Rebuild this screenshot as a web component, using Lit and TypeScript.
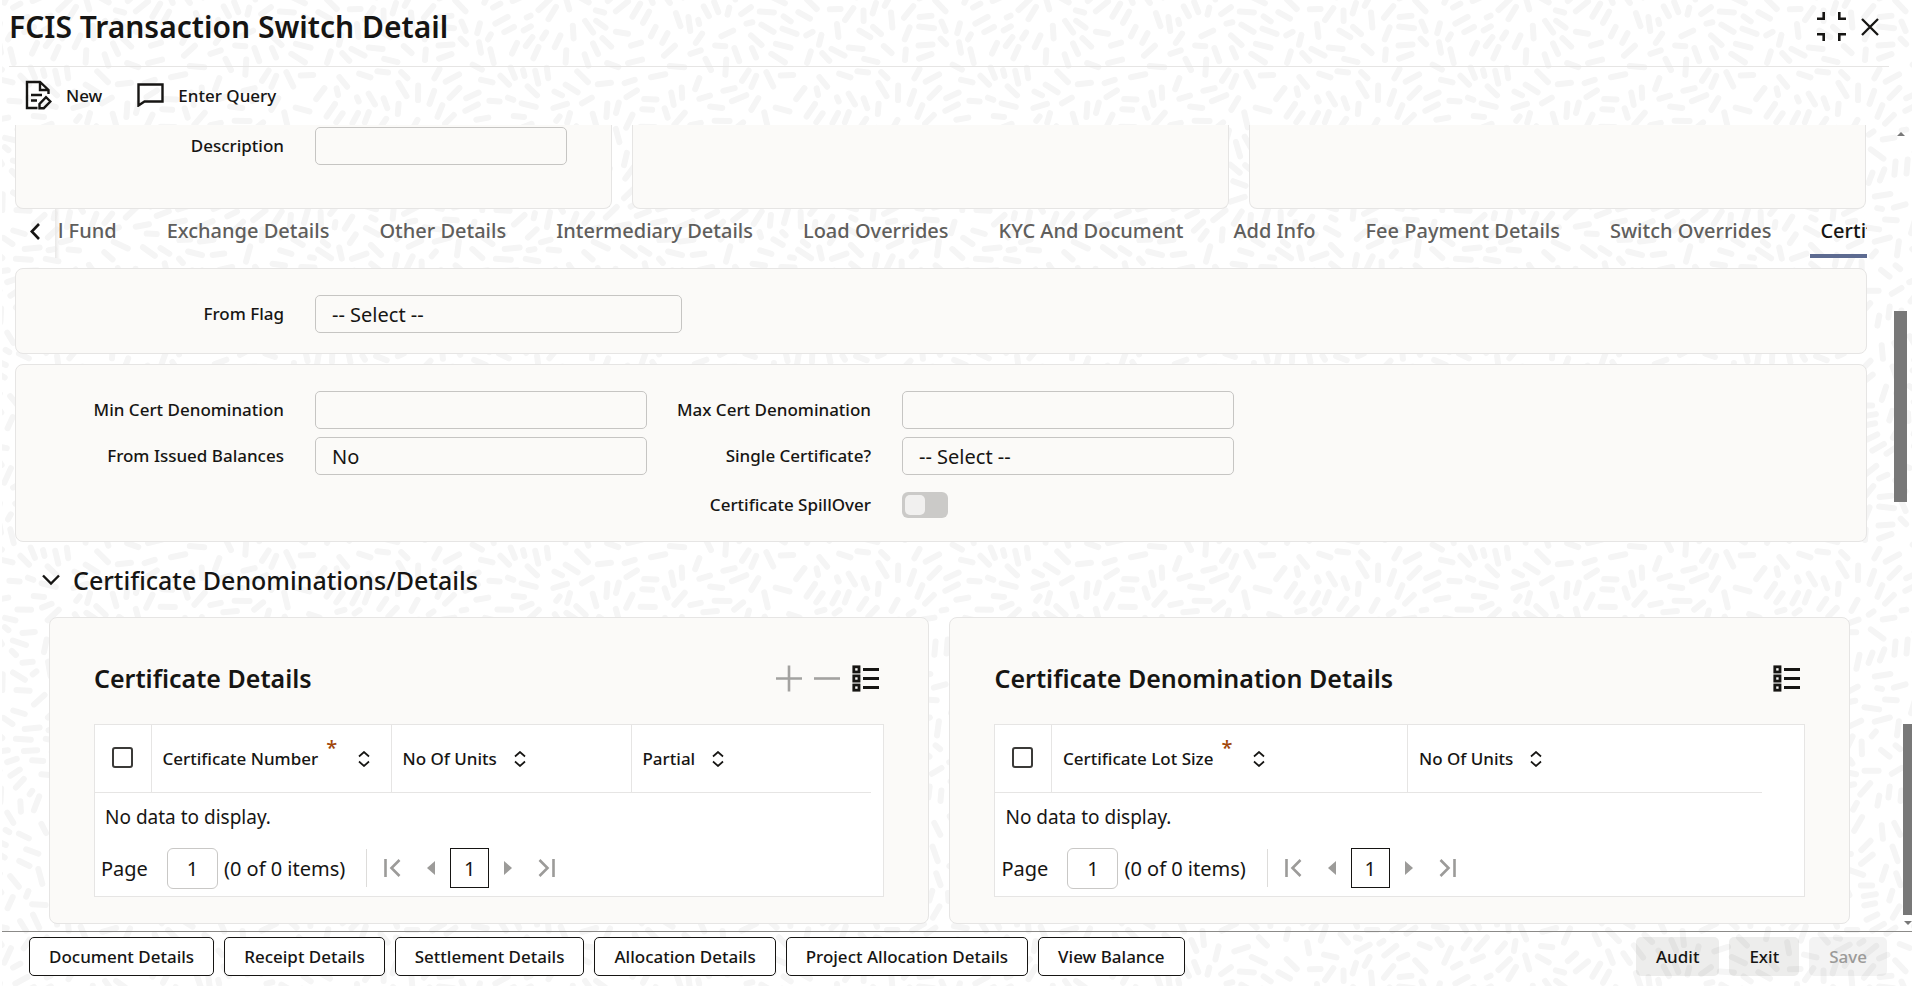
import { LitElement, html, css, svg } from "lit";
import { customElement, property } from "lit/decorators.js";

const TILE = 480;

/* Deterministic scatter of short rounded strokes that follow a smooth flow field. */
function buildStrokes(): string {
  let seed = 7;
  const rnd = () => {
    seed = (seed * 1103515245 + 12345) % 2147483648;
    return seed / 2147483648;
  };
  const wrap = (d: number) => Math.abs(d) > TILE / 2 ? TILE - Math.abs(d) : Math.abs(d);
  const k = (2 * Math.PI) / TILE;
  const pts: number[][] = [];
  const out: string[] = [];
  for (let i = 0; i < 40000; i++) {
    const x = rnd() * TILE;
    const y = rnd() * TILE;
    const a =
      1.5 * Math.sin(k * (2 * x + y)) + 1.4 * Math.cos(k * (2 * y - x)) +
      0.5 * Math.sin(k * (3 * x + 3 * y) + 1) + (rnd() - 0.5) * 0.2;
    const l = (i < 22000 ? 5 : 2) + rnd() * 3;
    const dx = Math.cos(a) * l;
    const dy = Math.sin(a) * l;
    const own = [-1, 0, 1].map((t) => [x + t * dx, y + t * dy]);
    const free = own.every(([px, py]) =>
      pts.every(([qx, qy]) => Math.hypot(wrap(px - qx), wrap(py - qy)) > 9));
    if (!free) continue;
    for (const t of [-1, -0.5, 0, 0.5, 1]) pts.push([(x + t * dx + TILE) % TILE, (y + t * dy + TILE) % TILE]);
    for (const ox of [-TILE, 0, TILE]) {
      for (const oy of [-TILE, 0, TILE]) {
        const cx = x + ox;
        const cy = y + oy;
        if (cx < -12 || cy < -12 || cx > TILE + 12 || cy > TILE + 12) continue;
        out.push(`M${(cx - dx).toFixed(1)} ${(cy - dy).toFixed(1)}L${(cx + dx).toFixed(1)} ${(cy + dy).toFixed(1)}`);
      }
    }
  }
  return out.join("");
}

const strokes = buildStrokes();

const base = css`
  * { box-sizing: border-box; }
  button, input, select { font-family: inherit; color: inherit; margin: 0; }
  button { border: 0; background: none; padding: 0; cursor: pointer; }
  svg { display: block; }
  h1, h2, h3 { margin: 0; }
`;

const listIcon = html`<svg width="27" height="27" viewBox="0 0 27 27" fill="none" stroke="#161513" aria-hidden="true">
  <g stroke-width="2.8"><rect x="1.8" y="1.8" width="5.2" height="5.2"/><rect x="1.8" y="10.9" width="5.2" height="5.2"/><rect x="1.8" y="20" width="5.2" height="5.2"/></g>
  <path stroke-width="2.8" d="M11 4.5H27M11 13.5H27M11 22.5H27"/>
</svg>`;

const sortIcon = html`<svg width="12" height="16" viewBox="0 0 12 16" fill="none" stroke="#161513" stroke-width="1.7" aria-hidden="true">
  <path d="M1 5.5 6 1l5 4.5M1 10.5 6 15l5-4.5"/>
</svg>`;

interface Column { label: string; required?: boolean; width: number; }

@customElement("data-grid")
export class DataGrid extends LitElement {
  @property() heading = "";
  @property({ type: Boolean }) editable = false;
  @property({ attribute: false }) columns: Column[] = [];

  static styles = [base, css`
    :host { display: block; min-width: 0; border: 1px solid #e6e5e4; border-radius: 8px; background: #fbfaf8; padding: 42px 44px 26px; }
    .head { display: flex; align-items: center; justify-content: space-between; height: 36px; padding-right: 5px; }
    h3 { font-size: 25px; line-height: 36px; font-weight: 600; }
    .tools { display: flex; gap: 12px; }
    .frame { margin-top: 28px; border: 1px solid #e6e5e4; background: #fff; height: 173px; overflow: hidden; }
    table { border-collapse: collapse; table-layout: fixed; width: 0; }
    th { height: 67px; text-align: left; padding: 0 0 0 11px; border-bottom: 1px solid #e6e5e4; font-size: 17px; font-weight: 500; white-space: nowrap; }
    th + th { border-left: 1px solid #e6e5e4; }
    th.pick { width: 56px; padding: 0 0 2px 17px; }
    .tick { appearance: none; display: block; width: 21px; height: 21px; border: 2px solid #3b3a38; border-radius: 3px; background: #fff; }
    .cell { display: flex; align-items: center; gap: 17px; padding-top: 1px; }
    .req { align-self: flex-start; color: #a1470a; font-size: 20px; line-height: 16px; margin: -7px 4px 0 -9px; }
    td { padding: 0 0 0 10px; height: 49px; font-size: 19px; }
    .pager { display: flex; align-items: center; height: 40px; padding-left: 6px; margin-top: 7px; font-size: 20px; }
    .pages { width: 51px; height: 41px; margin: 0 6px 0 19px; border: 1px solid #c9c8c6; border-radius: 6px; background: #fff; text-align: center; font-size: 20px; padding: 0; }
    .nav { display: flex; align-items: center; height: 38px; margin-left: 21px; padding-left: 17px; border-left: 1px solid #dddcda; }
    .current { width: 39px; height: 40px; border: 1px solid #161513; margin: 0 15px 0 15px; font-size: 20px; }
    .prev { margin-left: 26px; }
    .last { margin-left: 26px; }
  `];

  render() {
    return html`
      <div class="head">
        <h3>${this.heading}</h3>
        <div class="tools">
          ${this.editable ? html`
            <button aria-label="Add row"><svg width="26" height="27" viewBox="0 0 26 27" stroke="#a3a2a0" stroke-width="2.6"><path d="M0 13.5H26M13 .5V26.5"/></svg></button>
            <button aria-label="Delete row"><svg width="26" height="27" viewBox="0 0 26 27" stroke="#a3a2a0" stroke-width="2.6"><path d="M0 13.5H26"/></svg></button>` : ""}
          <button aria-label="Form view">${listIcon}</button>
        </div>
      </div>
      <div class="frame">
        <table>
          <thead>
            <tr>
              <th class="pick"><input class="tick" type="checkbox" aria-label="Select all"></th>
              ${this.columns.map((c) => html`<th style="width:${c.width}px"><div class="cell"><span>${c.label}</span>${c.required ? html`<span class="req">*</span>` : ""}${sortIcon}</div></th>`)}
            </tr>
          </thead>
          <tbody><tr><td colspan=${this.columns.length + 1}>No data to display.</td></tr></tbody>
        </table>
        <div class="pager">
          <label for="page">Page</label>
          <input id="page" class="pages" value="1">
          <span>(0 of 0 items)</span>
          <div class="nav">
            <button aria-label="First page"><svg width="17" height="18" viewBox="0 0 17 18" fill="none" stroke="#9c9b99" stroke-width="2.6"><path d="M1.5 0V18M15.5 1 7.5 9l8 8"/></svg></button>
            <button class="prev" aria-label="Previous page"><svg width="8" height="16" viewBox="0 0 8 16" fill="#9c9b99"><path d="M8 1v14L0 8z"/></svg></button>
            <button class="current">1</button>
            <button aria-label="Next page"><svg width="8" height="16" viewBox="0 0 8 16" fill="#9c9b99"><path d="M0 1v14l8-7z"/></svg></button>
            <button class="last" aria-label="Last page"><svg width="17" height="18" viewBox="0 0 17 18" fill="none" stroke="#9c9b99" stroke-width="2.6"><path d="M15.5 0V18M1.5 1l8 8-8 8"/></svg></button>
          </div>
        </div>
      </div>`;
  }
}

const tabs = ["l Fund", "Exchange Details", "Other Details", "Intermediary Details", "Load Overrides", "KYC And Document",
  "Add Info", "Fee Payment Details", "Switch Overrides", "Certificate"];
const links = ["Document Details", "Receipt Details", "Settlement Details", "Allocation Details", "Project Allocation Details", "View Balance"];

@customElement("app-root")
export class AppRoot extends LitElement {
  static styles = [base, css`
    :host { display: flex; flex-direction: column; position: relative; height: 100vh; overflow: hidden; background: #fff; color: #161513; font-family: "Noto Sans", "Open Sans", sans-serif; font-size: 17px; }
    .backdrop { position: absolute; inset: 0 0 0 2px; width: 100%; height: 100%; }
    .top, .toolbar, .body, .footer { position: relative; }
    .top { display: flex; justify-content: space-between; height: 67px; margin: 0 23px 0 9px; border-bottom: 1px solid #e6e5e4; }
    h1 { font-size: 30px; line-height: 53px; font-weight: 650; }
    .window { display: flex; gap: 15px; height: 53px; align-items: center; padding-right: 10px; }
    .toolbar { display: flex; gap: 35px; height: 58px; align-items: flex-start; padding: 12px 0 0 25px; flex: none; }
    .action { display: flex; align-items: center; gap: 14px; height: 32px; font-size: 17px; font-weight: 500; }
    .body { flex: 1; min-height: 0; overflow: hidden; padding: 0 45px 0 15px; }
    .summary { display: grid; grid-template-columns: 597fr 597fr 617fr; gap: 20px; padding-right: 1px; }
    .panel { border: 1px solid #e6e5e4; border-radius: 8px; background: #fbfaf8; }
    .cut { border-top: 0; border-radius: 0 0 8px 8px; height: 84px; padding-top: 2px; }
    .field { display: grid; grid-template-columns: 268px minmax(0, 1fr); column-gap: 31px; align-items: center; }
    .field label, .pair label { text-align: right; font-size: 17px; font-weight: 500; white-space: nowrap; padding-bottom: 2px; }
    .box { appearance: none; width: 100%; height: 38px; border: 1px solid #c6c5c3; border-radius: 5px; background: #fbfaf8; padding: 0 16px; font-size: 20px; font-weight: 400; opacity: 1; }
    .box.small { width: 252px; }
    .box.medium { width: 367px; }
    .tabbar { display: flex; height: 49px; align-items: stretch; }
    .back { width: 40px; display: flex; align-items: center; padding: 0 0 4px 15px; }
    .strip { flex: 1; min-width: 0; display: flex; gap: 14px; overflow: hidden; background: linear-gradient(90deg, #e9e8e7, transparent 5px); }
    .tab { flex: none; padding: 0 18px 3px; font-size: 20px; font-weight: 500; color: #5f5e5c; border-bottom: 4px solid transparent; white-space: nowrap; }
    .tab:first-child { padding-left: 3px; }
    .tab.on { color: #161513; border-bottom-color: #5d6b91; padding-left: 10px; margin-left: 7px; }
    .flag { margin-top: 10px; padding: 26px 0 20px; }
    .cert { margin-top: 10px; padding: 26px 0 23px; }
    .pair { display: grid; grid-template-columns: 268px minmax(0, 332px) 193px minmax(0, 332px); column-gap: 31px; row-gap: 8px; align-items: center; }
    .pair > .tight { margin-left: -31px; }
    .toggle { appearance: none; display: block; width: 46px; height: 26px; margin: 9px 0 0; border-radius: 6px; background: #cbcac8; padding: 3px; }
    .toggle::before { content: ""; display: block; width: 20px; height: 20px; border-radius: 5px; background: #f1f0ef; }
    .late { padding-top: 9px; }
    .gap { grid-column: span 2; }
    .section { display: flex; align-items: center; gap: 13px; height: 75px; padding-left: 27px; }
    h2 { font-size: 25px; line-height: 36px; font-weight: 500; }
    .grids { display: grid; grid-template-columns: 880fr 900fr; gap: 20px; margin: 0 17px 0 34px; }
    .bar { position: absolute; display: flex; flex-direction: column; align-items: center; width: 13px; }
    .outer { top: 7px; right: 5px; }
    .outer .thumb { margin-top: 175px; width: 13px; height: 191px; }
    .inner { right: 0; bottom: 6px; width: 9px; align-items: flex-end; }
    .inner .thumb { width: 9px; height: 191px; margin-bottom: 6px; }
    .thumb { background: #787878; }
    .up { border: 4px solid transparent; border-bottom: 4px solid #787878; border-top: 0; }
    .down { border: 4px solid transparent; border-top: 4px solid #787878; border-bottom: 0; }
    .footer { flex: none; display: flex; justify-content: space-between; height: 55px; margin-left: 2px; padding: 5px 25px 0 27px; border-top: 1px solid #8b8a88; }
    .group { display: flex; gap: 10px; }
    .btn { height: 39px; padding: 0 19px; border: 1px solid #161513; border-radius: 5px; background: #fff; font-size: 17px; font-weight: 500; white-space: nowrap; }
    .soft { border-color: transparent; background: rgba(22, 21, 19, 0.08); background-clip: border-box; }
    .soft:disabled { color: #9b9a98; background: rgba(22, 21, 19, 0.05); }
  `];

  render() {
    return html`
      <svg class="backdrop" aria-hidden="true">
        <defs>
          <pattern id="flow" width=${TILE} height=${TILE} patternUnits="userSpaceOnUse">
            ${svg`<path d=${strokes} stroke="#f5f5f5" stroke-width="6" stroke-linecap="round" fill="none"/>`}
          </pattern>
        </defs>
        <rect width="100%" height="100%" fill="url(#flow)"/>
      </svg>

      <header class="top">
        <h1>FCIS Transaction Switch Detail</h1>
        <div class="window">
          <button aria-label="Restore"><svg width="29" height="29" viewBox="0 0 29 29" fill="none" stroke="#161513" stroke-width="2.6"><path d="M0 6.7H6.7V0M22.3 0V6.7H29M0 22.3H6.7V29M22.3 29V22.3H29"/></svg></button>
          <button aria-label="Close"><svg width="18" height="18" viewBox="0 0 18 18" fill="none" stroke="#161513" stroke-width="2.3"><path d="M1 1l16 16M17 1 1 17"/></svg></button>
        </div>
      </header>

      <nav class="toolbar">
        <button class="action">
          <svg width="27" height="30" viewBox="0 0 27 30" fill="none" stroke="#161513" stroke-width="2.4"><path d="M12.5 28H2V2H15L23.5 10V14M15 2V10H23.5M6 15H17M6 20.5H12"/><path d="M14.5 28.2V24L21 17.2l4.4 4.3L18.8 28.2z"/></svg>
          New
        </button>
        <button class="action">
          <svg width="27" height="24" viewBox="0 0 27 24" fill="none" stroke="#161513" stroke-width="2.4"><path d="M1.5 1.5H25.5V18.5H7.5L1.5 22.5z"/></svg>
          Enter Query
        </button>
      </nav>

      <main class="body">
        <div class="summary">
          <div class="panel cut"><div class="field"><label for="desc">Description</label><input id="desc" class="box small"></div></div>
          <div class="panel cut"></div>
          <div class="panel cut"></div>
        </div>

        <div class="tabbar">
          <button class="back" aria-label="Previous tabs"><svg width="10" height="17" viewBox="0 0 10 17" fill="none" stroke="#161513" stroke-width="2.6"><path d="M9 1 1.8 8.5 9 16"/></svg></button>
          <div class="strip" role="tablist">
            ${tabs.map((t, i) => html`<button class="tab ${i === tabs.length - 1 ? "on" : ""}" role="tab">${t}</button>`)}
          </div>
        </div>

        <div class="panel flag">
          <div class="field"><label for="flag">From Flag</label><select id="flag" class="box medium"><option>-- Select --</option></select></div>
        </div>

        <div class="panel cert">
          <div class="pair">
            <label for="min">Min Cert Denomination</label><input id="min" class="box">
            <label for="max" class="tight">Max Cert Denomination</label><input id="max" class="box">
            <label for="issued">From Issued Balances</label><select id="issued" class="box"><option>No</option></select>
            <label for="single">Single Certificate?</label><select id="single" class="box"><option>-- Select --</option></select>
            <span class="gap"></span>
            <label for="spill" class="late">Certificate SpillOver</label><input id="spill" class="toggle" type="checkbox" role="switch">
          </div>
        </div>

        <div class="section">
          <button aria-label="Collapse section"><svg width="18" height="12" viewBox="0 0 18 12" fill="none" stroke="#161513" stroke-width="2.4"><path d="M1 1.5l8 8 8-8"/></svg></button>
          <h2>Certificate Denominations/Details</h2>
        </div>

        <div class="grids">
          <data-grid heading="Certificate Details" editable .columns=${[
            { label: "Certificate Number", required: true, width: 240 },
            { label: "No Of Units", width: 240 },
            { label: "Partial", width: 240 },
          ]}></data-grid>
          <data-grid heading="Certificate Denomination Details" .columns=${[
            { label: "Certificate Lot Size", required: true, width: 356 },
            { label: "No Of Units", width: 355 },
          ]}></data-grid>
        </div>

        <div class="bar outer"><i class="up"></i><i class="thumb"></i></div>
        <div class="bar inner"><i class="thumb"></i><i class="down"></i></div>
      </main>

      <footer class="footer">
        <div class="group">${links.map((l) => html`<button class="btn">${l}</button>`)}</div>
        <div class="group"><button class="btn soft">Audit</button><button class="btn soft">Exit</button><button class="btn soft" disabled>Save</button></div>
      </footer>`;
  }
}
